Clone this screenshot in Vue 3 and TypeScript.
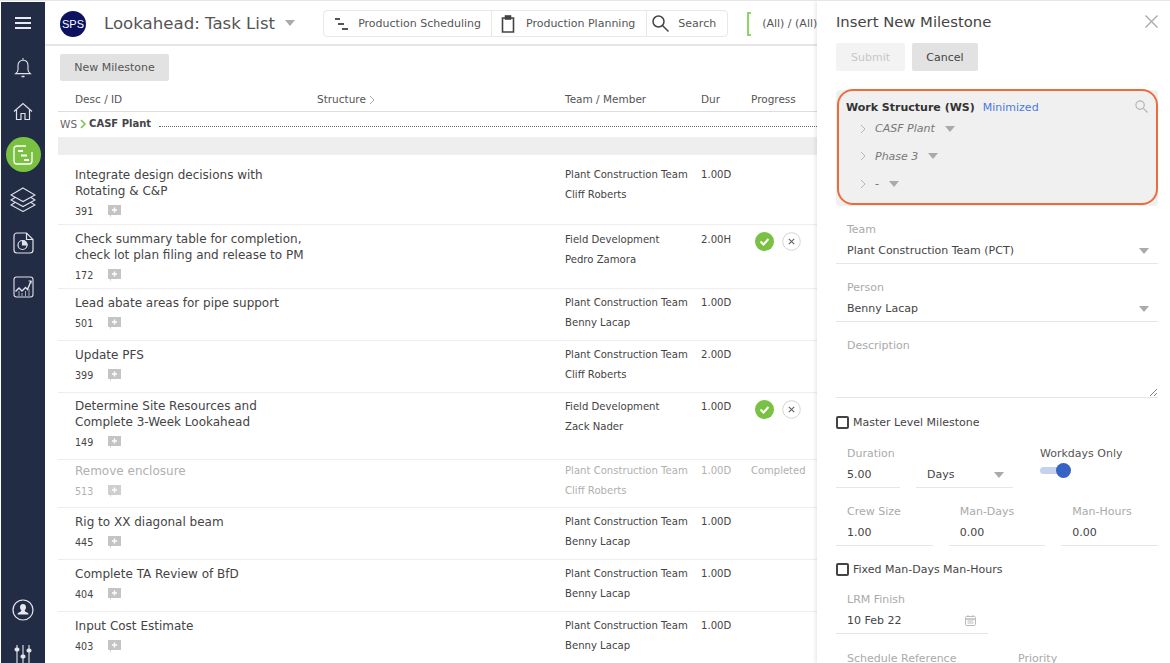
<script setup lang="ts">
interface Task {
  lines: string[];
  id: string;
  team: string;
  member: string;
  dur: string;
  height: number;
  pad: number;
  teamPad: number;
  actions?: boolean;
  done?: boolean;
}

const tasks: Task[] = [
  { lines: ['Integrate design decisions with', 'Rotating & C&P'], id: '391', team: 'Plant Construction Team', member: 'Cliff Roberts', dur: '1.00D', height: 70, pad: 12, teamPad: 10 },
  { lines: ['Check summary table for completion,', 'check lot plan filing and release to PM'], id: '172', team: 'Field Development', member: 'Pedro Zamora', dur: '2.00H', height: 64, pad: 6, teamPad: 5, actions: true },
  { lines: ['Lead abate areas for pipe support'], id: '501', team: 'Plant Construction Team', member: 'Benny Lacap', dur: '1.00D', height: 52, pad: 6, teamPad: 4 },
  { lines: ['Update PFS'], id: '399', team: 'Plant Construction Team', member: 'Cliff Roberts', dur: '2.00D', height: 52, pad: 6, teamPad: 4 },
  { lines: ['Determine Site Resources and', 'Complete 3-Week Lookahead'], id: '149', team: 'Field Development', member: 'Zack Nader', dur: '1.00D', height: 67, pad: 5, teamPad: 4, actions: true },
  { lines: ['Remove enclosure'], id: '513', team: 'Plant Construction Team', member: 'Cliff Roberts', dur: '1.00D', height: 48, pad: 3, teamPad: 1, done: true },
  { lines: ['Rig to XX diagonal beam'], id: '445', team: 'Plant Construction Team', member: 'Benny Lacap', dur: '1.00D', height: 52, pad: 6, teamPad: 4 },
  { lines: ['Complete TA Review of BfD'], id: '404', team: 'Plant Construction Team', member: 'Benny Lacap', dur: '1.00D', height: 52, pad: 6, teamPad: 4 },
  { lines: ['Input Cost Estimate'], id: '403', team: 'Plant Construction Team', member: 'Benny Lacap', dur: '1.00D', height: 52, pad: 6, teamPad: 4 },
];

const tree = ['CASF Plant', 'Phase 3', '-'];
</script>

<template>
  <div class="screen">
    <aside class="rail">
      <button class="rail-btn menu">
        <svg width="18" height="14" viewBox="0 0 18 14"><path d="M1 2h16M1 7h16M1 12h16" stroke="#e8eaf0" stroke-width="2" fill="none" /></svg>
      </button>
      <button class="rail-btn bell">
        <svg width="18" height="22" viewBox="0 0 18 22" fill="none" stroke="#dfe2ea" stroke-width="1.1"><path d="M9 1v2.3M9 3.3c-3.3 0-5 2.4-5 5.4v4.2c0 1.6-1 2.4-2.4 3.7h14.8c-1.4-1.3-2.4-2.1-2.4-3.7V8.7c0-3-1.7-5.4-5-5.4z" /><path d="M7.5 19.5h3" stroke-width="1.5" /></svg>
      </button>
      <button class="rail-btn home">
        <svg width="20" height="19" viewBox="0 0 20 19" fill="none" stroke="#dfe2ea" stroke-width="1.2"><path d="M1 9.5 10 1.5l9 8M3.5 8v9.5H8v-6h4v6h4.500V8" /></svg>
      </button>
      <button class="rail-btn active">
        <svg width="20" height="20" viewBox="0 0 20 20" fill="none" stroke="#fff" stroke-width="1.3"><path d="M13 1H4A3 3 0 0 0 1 4v12a3 3 0 0 0 3 3h12a3 3 0 0 0 3-3V7" /><path d="M5 6h5M8 10.5h6M11 15h5" stroke-width="1.8" /></svg>
      </button>
      <button class="rail-btn layers">
        <svg width="26" height="26" viewBox="0 0 26 26" fill="none" stroke="#dfe2ea" stroke-width="1.1"><path d="M13 2 25 9l-12 6.5L1 9zM5 11.5 1 14l12 6.5L25 14l-4-2.5M5 16.5 1 19l12 6.5L25 19l-4-2.5" /></svg>
      </button>
      <button class="rail-btn report">
        <svg width="21" height="22" viewBox="0 0 21 22" fill="none" stroke="#dfe2ea" stroke-width="1.2"><path d="M13.5 1H4a3 3 0 0 0-3 3v14a3 3 0 0 0 3 3h13a3 3 0 0 0 3-3V7.5zM13.5 1v6.5H20" /><circle cx="9.5" cy="13" r="4.5" /><path d="M9.5 13V8.5A4.500 4.500 0 0 1 14 13z" fill="#dfe2ea" /></svg>
      </button>
      <button class="rail-btn chart">
        <svg width="21" height="22" viewBox="0 0 21 22" fill="none" stroke="#dfe2ea" stroke-width="1.1"><rect x="1" y="1" width="19" height="20" rx="2.5" /><path d="M2.5 15.5 6 12l3 3 3.5-3.5 2 2L18 5" stroke-width="1.4" /><path d="M15.5 5H18v2.5" /><path d="M6 15v5M9 17v3M12.5 15v5M16 13v7" stroke-width=".7" /></svg>
      </button>
      <div class="rail-space"></div>
      <button class="rail-btn user">
        <svg width="22" height="22" viewBox="0 0 22 22"><circle cx="11" cy="11" r="10" fill="none" stroke="#e6e8ee" stroke-width="1.2" /><path d="M11 5c-2 0-3 1.5-3 3.3 0 1.300.6 2.400 1.300 3 0 .9-.5 1.300-1.500 1.700-1.300.5-2.300 1-2.300 2.500h11c0-1.500-1-2-2.300-2.500-1-.4-1.500-.8-1.500-1.700.7-.6 1.300-1.700 1.300-3C14 6.500 13 5 11 5z" fill="#e6e8ee" /></svg>
      </button>
      <button class="rail-btn sliders">
        <svg width="18" height="18" viewBox="0 0 18 18" stroke="#e6e8ee" fill="#e6e8ee" stroke-width="1.1"><path d="M3 0v18M9 0v18M15 0v18" /><rect x="1" y="3" width="4" height="3" rx="1.5" /><rect x="7" y="10" width="4" height="3" rx="1.5" /><rect x="13" y="4" width="4" height="3" rx="1.5" /></svg>
      </button>
    </aside>

    <main class="main">
      <header class="topbar">
        <span class="logo">SPS</span>
        <h1 class="page-title">Lookahead: Task List</h1>
        <i class="caret title-caret"></i>
        <nav class="tools">
          <button class="tool tool-sched">
            <svg width="14" height="14" viewBox="0 0 14 14"><path d="M0 2h5M3 7h6M7 12h6" stroke="#555" stroke-width="2" /></svg>
            Production Scheduling
          </button>
          <button class="tool tool-plan">
            <svg width="14" height="18" viewBox="0 0 14 18" fill="none" stroke="#444" stroke-width="1.6"><path d="M4 3H1.5v14h11V3H10" /><rect x="4.5" y="1" width="5" height="3" fill="#444" /></svg>
            Production Planning
          </button>
          <button class="tool tool-search">
            <svg width="17" height="17" viewBox="0 0 17 17" fill="none" stroke="#444" stroke-width="1.5"><circle cx="6.5" cy="6.5" r="5.5" /><path d="m10.500 10.500 6 6" /></svg>
            Search
          </button>
        </nav>
        <span class="bracket"></span>
        <span class="scope">(All) / (All)</span>
      </header>

      <div class="content">
        <button class="new-btn">New Milestone</button>
        <div class="col-head">
          <span class="c-desc">Desc / ID</span>
          <span class="c-struct">Structure
            <svg width="6" height="10" viewBox="0 0 6 10" fill="none" stroke="#aaa"><path d="m1 1 4 4-4 4" /></svg>
          </span>
          <span class="c-team">Team / Member</span>
          <span class="c-dur">Dur</span>
          <span class="c-prog">Progress</span>
        </div>
        <div class="ws-row">
          <span class="ws-label">WS</span>
          <svg width="6" height="10" viewBox="0 0 6 10" fill="none" stroke="#7ac143" stroke-width="1.5"><path d="m1 1 4 4-4 4" /></svg>
          <b>CASF Plant</b>
          <span class="ws-line"></span>
        </div>
        <div class="band"></div>

        <div
          v-for="task in tasks"
          :key="task.id"
          class="task"
          :class="{ done: task.done }"
          :style="{ height: task.height + 'px' }"
        >
          <div class="task-desc" :style="{ paddingTop: task.pad + 'px' }">
            <div class="task-title">
              <div v-for="line in task.lines" :key="line">{{ line }}</div>
            </div>
            <div class="task-id">
              {{ task.id }}
              <svg class="note" width="13" height="13" viewBox="0 0 13 13"><path d="M0 0h13v10H3v3l-1-3H0z" fill="#c4c4c4" /><path d="M6.5 2.5v5M4 5h5" stroke="#fff" stroke-width="1.4" /></svg>
            </div>
          </div>
          <div class="task-team" :style="{ paddingTop: task.teamPad + 'px' }">
            <div>{{ task.team }}</div>
            <div>{{ task.member }}</div>
          </div>
          <div class="task-dur" :style="{ paddingTop: task.teamPad + 'px' }">{{ task.dur }}</div>
          <div class="task-prog">
            <template v-if="task.actions">
              <svg width="19" height="19" viewBox="0 0 19 19"><circle cx="9.5" cy="9.5" r="9.5" fill="#7ac143" /><path d="m5.5 9.500 3 3 5-5.500" fill="none" stroke="#fff" stroke-width="2" /></svg>
              <svg width="19" height="19" viewBox="0 0 19 19"><circle cx="9.5" cy="9.5" r="8.8" fill="#fff" stroke="#d4d4d4" /><path d="m6.8 6.8 5.400 5.400M12.200 6.800l-5.400 5.400" stroke="#666" stroke-width="1.2" /></svg>
            </template>
            <span v-else-if="task.done">Completed</span>
          </div>
        </div>
      </div>
    </main>

    <section class="panel">
      <div class="panel-head">
        <h2>Insert New Milestone</h2>
        <svg width="13" height="13" viewBox="0 0 13 13" fill="none" stroke="#aaa" stroke-width="1.4"><path d="m.5.5 12 12M12.5.5l-12 12" /></svg>
      </div>
      <div class="panel-actions">
        <button class="btn-submit">Submit</button>
        <button class="btn-cancel">Cancel</button>
      </div>

      <div class="ws-box">
        <div class="ws-ring">
          <div class="ws-title">
            <b>Work Structure (WS)</b>
            <span class="min-link">Minimized</span>
            <svg class="ws-search" width="13" height="13" viewBox="0 0 14 14" fill="none" stroke="#b5b5b5" stroke-width="1.3"><circle cx="5.5" cy="5.5" r="4.5" /><path d="m9 9 4.5 4.5" /></svg>
          </div>
          <div v-for="item in tree" :key="item" class="tree-item">
            <svg width="6" height="10" viewBox="0 0 6 10" fill="none" stroke="#b5b5b5"><path d="m1 1 4 4-4 4" /></svg>
            <em>{{ item }}</em>
            <i class="caret"></i>
          </div>
        </div>
      </div>

      <div class="field select team-field">
        <label>Team</label>
        <div class="val">Plant Construction Team (PCT)<i class="caret"></i></div>
      </div>
      <div class="field select">
        <label>Person</label>
        <div class="val">Benny Lacap<i class="caret"></i></div>
      </div>
      <div class="field desc-field">
        <label>Description</label>
        <svg class="grip" width="7" height="7" viewBox="0 0 7 7" stroke="#666" stroke-width=".8"><path d="M0 7 7 0M4 7l3-3" /></svg>
      </div>

      <label class="check first-check"><span class="box"></span>Master Level Milestone</label>

      <div class="row duration-row">
        <div class="field dur-field"><label>Duration</label><div class="val">5.00</div></div>
        <div class="field unit-field"><label>&nbsp;</label><div class="val">Days<i class="caret"></i></div></div>
        <div class="workdays">
          <div class="wd-label">Workdays Only</div>
          <span class="switch"><span class="knob"></span></span>
        </div>
      </div>

      <div class="row triple">
        <div class="field"><label>Crew Size</label><div class="val">1.00</div></div>
        <div class="field"><label>Man-Days</label><div class="val">0.00</div></div>
        <div class="field"><label>Man-Hours</label><div class="val">0.00</div></div>
      </div>

      <label class="check second-check"><span class="box"></span>Fixed Man-Days Man-Hours</label>

      <div class="field lrm-field">
        <label>LRM Finish</label>
        <div class="val">10 Feb 22
          <svg width="11" height="11" viewBox="0 0 11 11" fill="none" stroke="#bbb"><rect x=".5" y="1.5" width="10" height="9" rx="1" /><path d="M.5 4h10" stroke-width="1.5" /><path d="M3 0v2M8 0v2M2.500 6h6M2.500 8h6" /></svg>
        </div>
      </div>

      <div class="row last-row">
        <div class="field"><label>Schedule Reference</label></div>
        <div class="field"><label>Priority</label></div>
      </div>
    </section>
  </div>
</template>

<style>
html, body {
  margin: 0;
  height: 100%;
  overflow: hidden;
  background: #fff;
}
</style>

<style scoped>
.screen {
  position: relative;
  display: flex;
  box-sizing: border-box;
  width: 1170px;
  height: 663px;
  padding-top: 1px;
  overflow: hidden;
  background: #fff;
  border-top: 1px solid #e6e6e6;
  font-family: "DejaVu Sans", Verdana, sans-serif;
  color: #444;
}
button {
  padding: 0;
  border: none;
  background: none;
  font-family: inherit;
}

/* left rail */
.rail {
  flex: none;
  display: flex;
  flex-direction: column;
  align-items: center;
  width: 44px;
  margin-left: 1px;
  background: #222c45;
}
.rail-btn {
  flex: none;
  display: flex;
  align-items: center;
  justify-content: center;
}
.menu { margin-top: 14px; height: 14px; }
.bell { margin-top: 27px; height: 22px; }
.home { margin-top: 23px; height: 19px; }
.active {
  width: 35px;
  height: 35px;
  margin-top: 16px;
  border-radius: 50%;
  background: #7ac143;
}
.layers { margin-top: 14px; height: 26px; }
.report { margin-top: 20px; height: 22px; }
.chart { margin-top: 22px; height: 22px; }
.rail-space { flex: 1; }
.user { height: 22px; }
.sliders { margin-top: 24px; height: 18px; }

/* header */
.main {
  flex: none;
  display: flex;
  flex-direction: column;
  width: 772px;
  min-width: 0;
}
.topbar {
  flex: none;
  display: flex;
  align-items: center;
  height: 41px;
  padding-top: 1px;
  overflow: hidden;
  border-bottom: 2px solid #e6e6e6;
  white-space: nowrap;
}
.logo {
  flex: none;
  width: 26px;
  height: 26px;
  margin-left: 15px;
  border-radius: 50%;
  background: #0c1260;
  color: #fff;
  font: 11px/26px "Liberation Sans", Arial, sans-serif;
  text-align: center;
}
.page-title {
  margin: 0 0 0 18px;
  font-size: 16.6px;
  font-weight: 400;
  color: #555;
}
.caret {
  display: inline-block;
  width: 0;
  height: 0;
  border-left: 5px solid transparent;
  border-right: 5px solid transparent;
  border-top: 6px solid #aaa;
}
.title-caret { flex: none; margin-left: 10px; margin-top: -2px; }
.tools {
  flex: none;
  display: flex;
  box-sizing: border-box;
  height: 27px;
  margin-left: 28px;
  border: 1px solid #e8e8e8;
  border-radius: 4px;
}
.tool {
  display: flex;
  align-items: center;
  padding-right: 10px;
  border-left: 1px solid #e8e8e8;
  font-size: 11px;
  line-height: 27px;
  color: #555;
}
.tool-sched { gap: 9px; padding-left: 11px; border-left: none; }
.tool-plan { gap: 11px; padding-left: 9px; padding-right: 11px; }
.tool-search { gap: 9px; padding-left: 5px; padding-right: 11px; }
.bracket {
  flex: none;
  box-sizing: border-box;
  width: 4px;
  height: 24px;
  margin-left: 19px;
  border: 2px solid #8fd16a;
  border-right: none;
}
.scope {
  margin-left: 11px;
  font-size: 11px;
  color: #555;
}

/* task list */
.content {
  flex: 1;
  min-height: 0;
  padding-left: 13px;
}
.new-btn {
  display: block;
  width: 109px;
  height: 27px;
  margin: 8px 0 0 2px;
  border-radius: 2px;
  background: #e2e2e2;
  font-size: 11px;
  color: #555;
}
.col-head {
  display: flex;
  align-items: flex-start;
  box-sizing: border-box;
  height: 29px;
  margin-top: 2px;
  padding: 10px 0 0 17px;
  border-bottom: 1px solid #ddd;
  font-size: 10.5px;
  line-height: 13px;
  color: #555;
  white-space: nowrap;
}
.c-desc { width: 242px; }
.c-struct { display: flex; align-items: center; gap: 3px; width: 248px; }
.c-team { width: 136px; }
.c-dur { width: 50px; }
.ws-row {
  display: flex;
  align-items: center;
  gap: 3px;
  box-sizing: border-box;
  height: 25px;
  padding: 0 0 2px 2px;
  font-size: 10.5px;
  white-space: nowrap;
}
.ws-label { color: #666; }
.ws-row b { font-size: 10px; color: #444; }
.ws-line {
  flex: 1;
  margin: 5px 0 0 5px;
  border-top: 1px dotted #666;
}
.band { height: 18px; background: #eee; }
.task {
  display: flex;
  box-sizing: border-box;
  padding-left: 17px;
  overflow: hidden;
  border-bottom: 1px solid #eee;
  white-space: nowrap;
}
.task-desc { flex: none; width: 490px; }
.task-title { font-size: 12px; line-height: 16px; }
.task-id {
  display: flex;
  align-items: center;
  gap: 15px;
  height: 15px;
  margin-top: 5px;
  font-size: 9.6px;
}
.task-team,
.task-dur {
  flex: none;
  font-size: 10.1px;
  line-height: 19.5px;
}
.task-team { width: 136px; }
.task-dur { width: 50px; }
.task-prog {
  flex: 1;
  display: flex;
  align-items: flex-start;
  gap: 8px;
  padding: 7px 0 0 4px;
  font-size: 10px;
}
.task.done { color: #b0b0b0; }
.task.done .task-prog { padding: 1px 0 0; line-height: 19.5px; }
.task.done .note { opacity: 0.8; }

/* side panel */
.panel {
  position: absolute;
  left: 817px;
  top: 0;
  box-sizing: border-box;
  width: 353px;
  height: 662px;
  padding: 10px 12px 0 19px;
  overflow: hidden;
  background: #fff;
  box-shadow: -2px 0 3px rgba(0, 0, 0, 0.08);
  font-size: 11px;
  white-space: nowrap;
}
.panel-head {
  display: flex;
  align-items: center;
  justify-content: space-between;
  height: 20px;
}
.panel-head h2 {
  margin: 0;
  font-size: 14.8px;
  font-weight: 400;
  color: #444;
}
.panel-actions {
  display: flex;
  gap: 7px;
  margin-top: 12px;
}
.panel-actions button {
  height: 28px;
  border-radius: 2px;
  font-size: 11px;
}
.btn-submit { width: 69px; background: #f3f3f3; color: #c8c8c8; }
.btn-cancel { width: 66px; background: #e2e2e2; color: #444; }
.ws-box {
  display: flow-root;
  box-sizing: border-box;
  height: 116px;
  margin-top: 19px;
  padding-left: 1px;
  border-radius: 4px;
  background: #f0f0f0;
}
.ws-ring {
  position: relative;
  box-sizing: border-box;
  width: 321px;
  height: 116px;
  margin-top: -1px;
  padding: 10px 0 0 7px;
  border: 2px solid #ee6c3c;
  border-radius: 16px;
}
.ws-title {
  display: flex;
  align-items: baseline;
  gap: 8px;
  margin-bottom: 1px;
  color: #333;
}
.min-link { color: #4a78dc; }
.ws-search { position: absolute; right: 8px; top: 9px; }
.tree-item {
  display: flex;
  align-items: center;
  height: 27.5px;
  padding-left: 14px;
  color: #777;
}
.tree-item em { margin-left: 9px; }
.tree-item .caret { margin-left: 10px; }

.field label {
  display: block;
  padding-left: 11px;
  color: #aaa;
  font-size: 11px;
  line-height: 16px;
}
.field .val {
  display: flex;
  align-items: center;
  justify-content: space-between;
  box-sizing: border-box;
  height: 26px;
  padding: 0 9px 0 11px;
  border-bottom: 1px solid #e6e6e6;
  font-size: 11px;
  color: #444;
}
.team-field { margin-top: 16px; }
.field.select + .field.select { margin-top: 16px; }
.desc-field {
  position: relative;
  height: 59px;
  margin-top: 16px;
  border-bottom: 1px solid #e6e6e6;
}
.grip { position: absolute; right: 1px; bottom: 1px; }
.check {
  display: flex;
  align-items: center;
  gap: 4px;
  height: 14px;
  margin-top: 17px;
  font-size: 11px;
  color: #444;
}
.box {
  flex: none;
  width: 9px;
  height: 9px;
  border: 2px solid #444;
  border-radius: 2px;
}
.row { display: flex; }
.duration-row { margin-top: 17px; }
.dur-field { width: 64px; margin-right: 16px; }
.unit-field { width: 97px; margin-right: 27px; }
.wd-label { color: #555; line-height: 16px; }
.switch {
  position: relative;
  display: block;
  width: 26px;
  height: 7px;
  margin-top: 5px;
  border-radius: 4px;
  background: #c5d1ee;
}
.knob {
  position: absolute;
  right: -5px;
  top: -4px;
  width: 15px;
  height: 15px;
  border-radius: 50%;
  background: #3563c6;
}
.triple {
  gap: 16px;
  margin-top: 16px;
}
.triple .field { flex: 1; }
.second-check { margin-top: 16px; }
.lrm-field { width: 152px; margin-top: 16px; }
.lrm-field .val { padding-right: 12px; }
.last-row { gap: 19px; margin-top: 17px; }
.last-row .field:first-child { width: 152px; }
</style>
